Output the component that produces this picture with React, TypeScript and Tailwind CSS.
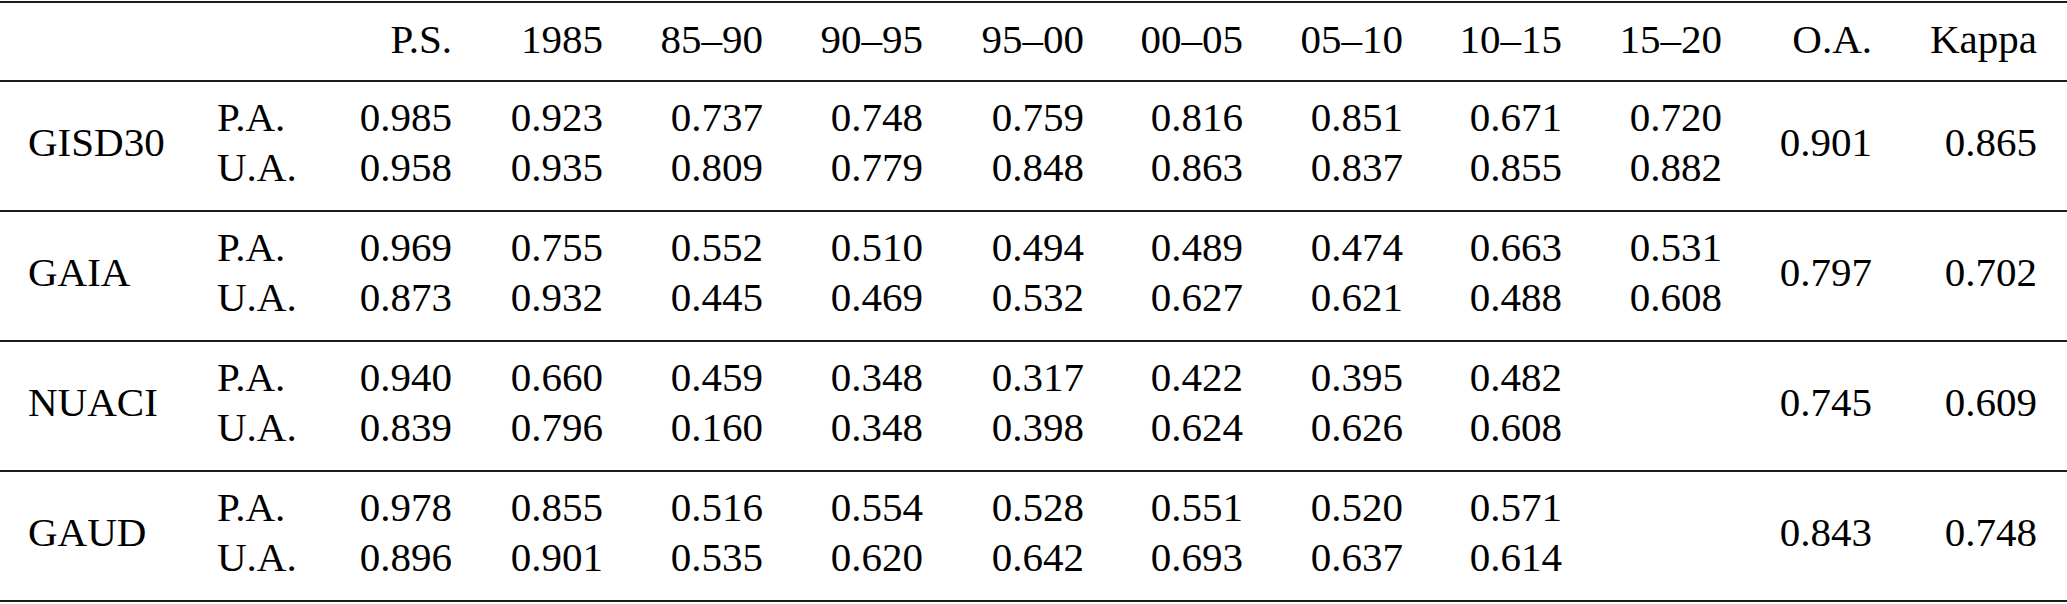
import React from "react";

const cols =
  "grid grid-cols-[189px_103px_132px_151px_160px_160px_161px_159px_160px_159px_160px_150px_165px] pl-[28px]";

const headers = ["P.S.", "1985", "85–90", "90–95", "95–00", "00–05", "05–10", "10–15", "15–20"];

type Row = {
  name: string;
  pa: string[];
  ua: string[];
  oa: string;
  kappa: string;
};

const rows: Row[] = [
  {
    name: "GISD30",
    pa: ["0.985", "0.923", "0.737", "0.748", "0.759", "0.816", "0.851", "0.671", "0.720"],
    ua: ["0.958", "0.935", "0.809", "0.779", "0.848", "0.863", "0.837", "0.855", "0.882"],
    oa: "0.901",
    kappa: "0.865",
  },
  {
    name: "GAIA",
    pa: ["0.969", "0.755", "0.552", "0.510", "0.494", "0.489", "0.474", "0.663", "0.531"],
    ua: ["0.873", "0.932", "0.445", "0.469", "0.532", "0.627", "0.621", "0.488", "0.608"],
    oa: "0.797",
    kappa: "0.702",
  },
  {
    name: "NUACI",
    pa: ["0.940", "0.660", "0.459", "0.348", "0.317", "0.422", "0.395", "0.482", ""],
    ua: ["0.839", "0.796", "0.160", "0.348", "0.398", "0.624", "0.626", "0.608", ""],
    oa: "0.745",
    kappa: "0.609",
  },
  {
    name: "GAUD",
    pa: ["0.978", "0.855", "0.516", "0.554", "0.528", "0.551", "0.520", "0.571", ""],
    ua: ["0.896", "0.901", "0.535", "0.620", "0.642", "0.693", "0.637", "0.614", ""],
    oa: "0.843",
    kappa: "0.748",
  },
];

export default function App() {
  return (
    <div className="font-serif">
      <div className="w-[2067px] bg-white pt-px font-['Liberation_Serif',serif] text-[41px] leading-[50px] text-black">
        <div className="border-y-2 border-[#1c1c1c]">
          {/* header */}
          <div className={`${cols} h-[77px] pt-[11px]`}>
            <div />
            <div />
            {headers.map((h) => (
              <div key={h} className="text-right">
                {h}
              </div>
            ))}
            <div className="text-right">O.A.</div>
            <div className="text-right">Kappa</div>
          </div>

          {rows.map((r) => (
            <div key={r.name} className={`${cols} h-[130px] border-t-2 border-[#1c1c1c] pt-[10px] pb-[18px]`}>
              <div className="self-center">{r.name}</div>
              <div>
                <div>P.A.</div>
                <div>U.A.</div>
              </div>
              {r.pa.map((v, i) => (
                <div key={i} className="text-right">
                  <div className="h-[50px]">{v}</div>
                  <div className="h-[50px]">{r.ua[i]}</div>
                </div>
              ))}
              <div className="self-center text-right">{r.oa}</div>
              <div className="self-center text-right">{r.kappa}</div>
            </div>
          ))}
        </div>
      </div>
    </div>
  );
}
